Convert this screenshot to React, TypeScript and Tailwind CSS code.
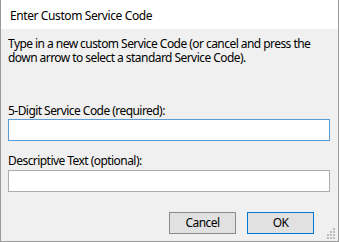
import React from "react";

export default function App() {
  return (
    <div
      className="w-[339px] h-[242px] bg-[#f0f0f0] border-x border-b border-[#9a9a9a] flex flex-col text-[12px] tracking-[-0.55px] text-black relative whitespace-nowrap"
      style={{ fontFamily: '"Noto Sans", "Open Sans", sans-serif' }}
    >
      <div className="h-[29px] bg-white flex items-center pl-[9px] pt-[2px] leading-[14px] tracking-[-0.4px]">
        Enter Custom Service Code
      </div>
      <div className="flex flex-col pl-[7px] pr-[8px]">
        <div className="mt-[8px] leading-[14px]">Type in a new custom Service Code (or cancel and press the</div>
        <div className="leading-[14px]">down arrow to select a standard Service Code).</div>
        <label className="mt-[39px] leading-[14px]">5-Digit Service Code (required):</label>
        <div className="mt-[1px] h-[22px] w-[322px] bg-white border border-[#5b9bd5]" />
        <label className="mt-[13px] leading-[14px]">Descriptive Text (optional):</label>
        <div className="mt-[2px] h-[22px] w-[322px] bg-white border border-[#acacac]" />
        <div className="mt-[20px] flex gap-[11px] pl-[161px]">
          <button className="w-[67px] h-[22px] bg-[#e1e1e1] border border-[#8a8a8a] flex items-center justify-center leading-[14px]">
            Cancel
          </button>
          <button className="w-[67px] h-[22px] bg-[#e1e1e1] border border-[#0078d7] flex items-center justify-center leading-[14px]">
            OK
          </button>
        </div>
      </div>
      <svg className="absolute right-[2px] bottom-[2px]" width="11" height="11" viewBox="0 0 11 11">
        {[
          [8, 0],
          [8, 3],
          [5, 3],
          [8, 6],
          [5, 6],
          [2, 6],
          [8, 9],
          [5, 9],
          [2, 9],
        ].map(([x, y], i) => (
          <rect key={i} x={x} y={y} width="2" height="2" fill="#bcbcbc" />
        ))}
      </svg>
    </div>
  );
}
